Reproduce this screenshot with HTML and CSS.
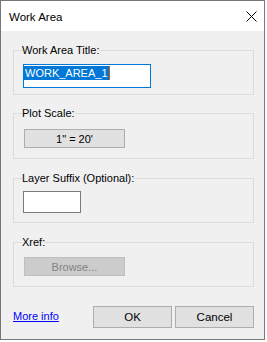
FILE: index.html
```
<!DOCTYPE html>
<html lang="en">
<head>
    <meta charset="UTF-8">
    <meta name="viewport" content="width=device-width, initial-scale=1.0">
    <title>Work Area</title>
    <link rel="stylesheet" href="styles.css">
</head>
<body>
    <div class="window">
        <div class="titlebar">
            <span class="title">Work Area</span>
            <svg class="close" width="11" height="11" viewBox="0 0 11 11">
                <path d="M0.5 0.5 L10.5 10.5 M10.5 0.5 L0.5 10.5" stroke="#000" stroke-width="1" fill="none"/>
            </svg>
        </div>
        <div class="content">
            <fieldset class="group group-title">
                <legend>Work Area Title:</legend>
                <div class="textbox textbox-focus"><span class="selected">WORK_AREA_1</span><span class="caret"></span></div>
            </fieldset>
            <fieldset class="group group-scale">
                <legend>Plot Scale:</legend>
                <button class="btn btn-wide">1" = 20'</button>
            </fieldset>
            <fieldset class="group group-suffix">
                <legend>Layer Suffix (Optional):</legend>
                <div class="textbox textbox-small"></div>
            </fieldset>
            <fieldset class="group group-xref">
                <legend>Xref:</legend>
                <button class="btn btn-wide" disabled>Browse...</button>
            </fieldset>
            <div class="footer">
                <a href="#" class="more-info">More info</a>
                <div class="actions">
                    <button class="btn btn-action">OK</button>
                    <button class="btn btn-action">Cancel</button>
                </div>
            </div>
        </div>
    </div>
</body>
</html>
```

FILE: styles.css
```
:root {
    --window-border: #777777;
    --face: #f0f0f0;
    --group-border: #dcdcdc;
    --btn-face: #e1e1e1;
    --btn-border: #adadad;
    --accent: #0078d7;
}

* {
    box-sizing: border-box;
}

body {
    margin: 0;
    background: #ffffff;
    font-family: 'Liberation Sans', Arial, sans-serif;
    font-size: 11px;
    color: #000;
}

.window {
    width: 265px;
    height: 340px;
    border: 1px solid var(--window-border);
    background: var(--face);
    display: flex;
    flex-direction: column;
}

.titlebar {
    height: 30px;
    background: #ffffff;
    display: flex;
    align-items: center;
    justify-content: space-between;
    padding: 0 7px 0 8px;
}

.title {
    font-size: 11.5px;
    margin-top: 1px;
}

.close {
    display: block;
    margin-top: 1px;
}

.content {
    flex: 1;
    padding: 12px 10px 0 12px;
}

.group {
    margin: 0;
    border: 1px solid var(--group-border);
    padding: 6px 9px 6px 9px;
    min-width: 0;
}

.group legend {
    padding: 0;
    margin-left: -1px;
    line-height: 15px;
}

.group-scale {
    margin-top: 11px;
    padding-top: 8px;
    padding-bottom: 10px;
}

.group-suffix {
    margin-top: 12px;
    padding-top: 5px;
    padding-bottom: 9px;
}

.group-xref {
    margin-top: 12px;
    padding-top: 7px;
    padding-bottom: 10px;
}

.textbox {
    background: #ffffff;
    border: 1px solid #7a7a7a;
    height: 22px;
    padding: 1px 0 0 0;
    display: flex;
    align-items: flex-start;
}

.textbox-focus {
    width: 128px;
    height: 24px;
    border-color: var(--accent);
}

.textbox-small {
    width: 58px;
}

.selected {
    background: var(--accent);
    color: #ffffff;
    line-height: 14px;
    padding-left: 1px;
    padding-right: 1px;
}

.caret {
    width: 1px;
    height: 14px;
    background: #d05a10;
}

.btn {
    font-family: inherit;
    font-size: 11px;
    color: #000;
    background: var(--btn-face);
    border: 1px solid var(--btn-border);
    border-radius: 0;
    padding: 0;
    display: block;
}

.btn-wide {
    width: 101px;
    height: 19px;
    margin-left: 1px;
}

.btn:disabled {
    background: #cccccc;
    border-color: #bfbfbf;
    color: #838383;
}

.footer {
    margin-top: 19px;
    display: flex;
    align-items: center;
    justify-content: space-between;
}

.more-info {
    color: #0000ff;
    margin-top: -2px;
}

.actions {
    display: flex;
    gap: 3px;
}

.btn-action {
    width: 79px;
    height: 22px;
    font-size: 11.5px;
}
```
